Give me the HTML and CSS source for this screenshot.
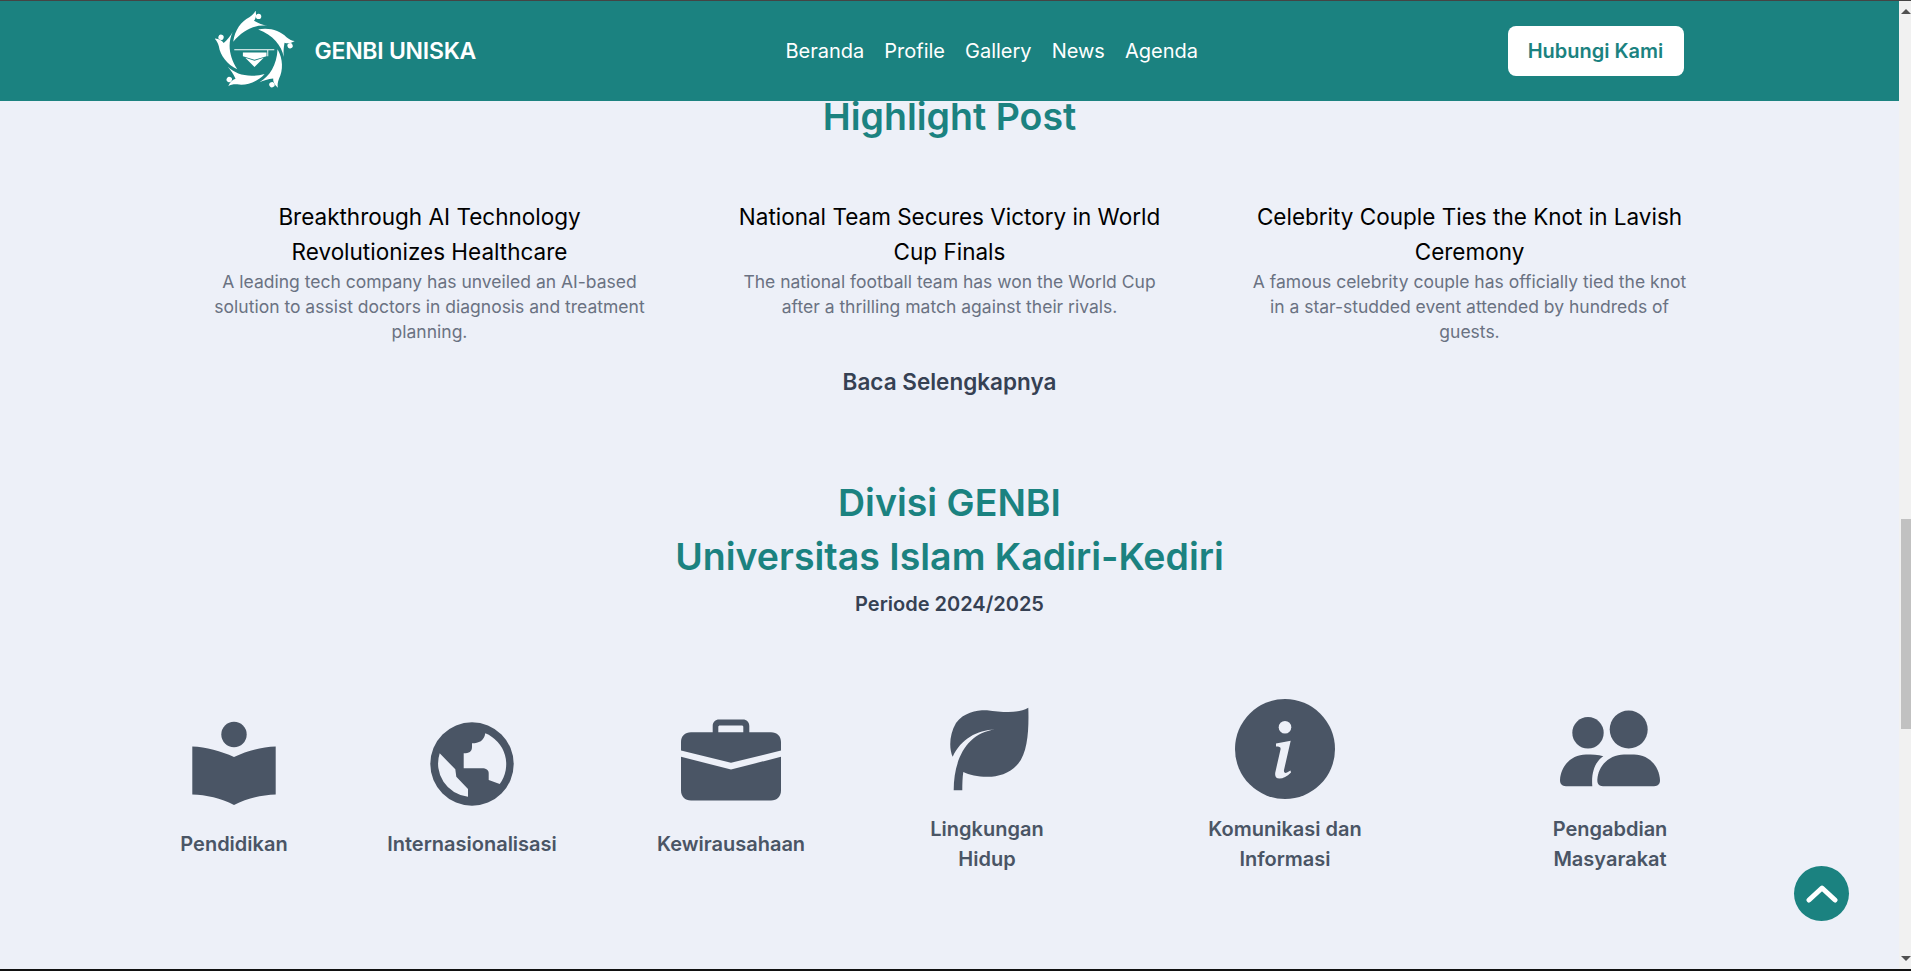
FILE: index.html
```html
<!DOCTYPE html>
<html lang="id">
<head>
<meta charset="utf-8">
<title>GENBI UNISKA</title>
<link rel="stylesheet" href="styles.css">
</head>
<body>
<div class="window">
  <div class="page">
    <header class="navbar">
      <div class="navbar-inner">
        <a class="brand" href="#">
          <svg class="brand-logo" viewBox="15.5 6 78 78" fill="#fff">
            <g id="arm">
              <circle cx="58" cy="11.3" r="2.6"/>
              <path d="M33.3 36C34.5 25 41 16 49 12C52 10 54 8 55 5.5C56 10 55.5 13 53.5 15.5C58 18 62 19.5 66.5 20.5C55 19 43 24 33.3 36Z"/>
            </g>
            <use href="#arm" transform="rotate(72 53.7 46.7)"/>
            <use href="#arm" transform="rotate(144 53.7 46.7)"/>
            <use href="#arm" transform="rotate(216 53.7 46.7)"/>
            <use href="#arm" transform="rotate(288 53.7 46.7)"/>
            <path d="M34.3 43.2H73.3V44.2H67.4V50H66.5V44.2H34.3Z"/>
            <path d="M42.7 46.5H65.7V50L54 53.5L42.7 50Z"/>
            <path d="M45 51.5L54 54.5L63 51.5L54 60.5Z"/>
          </svg>
          <span class="brand-name">GENBI UNISKA</span>
        </a>
        <nav class="nav-links">
          <a href="#">Beranda</a>
          <a href="#">Profile</a>
          <a href="#">Gallery</a>
          <a href="#">News</a>
          <a href="#">Agenda</a>
        </nav>
        <a class="contact-btn" href="#">Hubungi Kami</a>
      </div>
    </header>

    <section class="highlight">
      <h2 class="section-title">Highlight Post</h2>
      <div class="post-grid">
        <article class="post">
          <h3>Breakthrough AI Technology Revolutionizes Healthcare</h3>
          <p>A leading tech company has unveiled an AI-based solution to assist doctors in diagnosis and treatment planning.</p>
        </article>
        <article class="post">
          <h3>National Team Secures Victory in World Cup Finals</h3>
          <p>The national football team has won the World Cup after a thrilling match against their rivals.</p>
        </article>
        <article class="post">
          <h3>Celebrity Couple Ties the Knot in Lavish Ceremony</h3>
          <p>A famous celebrity couple has officially tied the knot in a star-studded event attended by hundreds of guests.</p>
        </article>
      </div>
      <a class="read-more" href="#">Baca Selengkapnya</a>
    </section>

    <section class="divisions">
      <h2 class="section-title">Divisi GENBI<br>Universitas Islam Kadiri-Kediri</h2>
      <p class="period">Periode 2024/2025</p>
      <div class="division-grid">
        <div class="division">
          <svg class="division-icon" viewBox="0 0 100 100" fill="#4a5565">
            <circle cx="50" cy="20.5" r="12.7"/>
            <path d="M8.3 32.5C22 33 37 37 50 43C63 37 78 33 91.7 32.5V80.5C78 81 63 84 50 91C37 84 22 81 8.3 80.5Z"/>
          </svg>
          <span>Pendidikan</span>
        </div>
        <div class="division">
          <svg class="division-icon" viewBox="0 0 100 100" fill="#4a5565">
            <path fill-rule="evenodd" d="M50 8.3A41.7 41.7 0 1 0 50 91.7A41.7 41.7 0 1 0 50 8.3ZM63.3 19.3A33.3 33.3 0 0 1 77.7 70L66.7 66V59.3C66.7 56 64 54.3 60 54.3H41.7V39.3C47 39.3 50 37.7 50 33V29.3C57 29.3 62 27 63.3 19.3ZM46 82.7A33.3 33.3 0 0 1 17.7 39.3L33.3 55.3L34.3 62.7L46 75Z"/>
          </svg>
          <span>Internasionalisasi</span>
        </div>
        <div class="division">
          <svg class="division-icon" viewBox="0 0 100 100" fill="#4a5565">
            <path fill-rule="evenodd" d="M31.7 18.2V12C31.7 8 34.5 5.5 38 5.5H62C65.5 5.5 68.3 8 68.3 12V18.2H90C96 18.2 100 22 100 28V36.5L50 48.8L0 36.5V28C0 22 4 18.2 10 18.2ZM37.3 18.2H62.3V13C62.3 12 61.7 11.5 60.7 11.5H39C38 11.5 37.3 12 37.3 13Z"/>
            <path d="M0 42.8L50 55.5L100 42.8V76.5C100 82.5 96 86.5 90 86.5H10C4 86.5 0 82.5 0 76.5Z"/>
          </svg>
          <span>Kewirausahaan</span>
        </div>
        <div class="division">
          <svg class="division-icon" viewBox="0 0 100 100" fill="#4a5565">
            <path d="M91.3 8.8C92 30 91 55 80 66C72 75 60 78 50 77.8C41 77.8 32 76 26.3 73C25.5 78 25.3 85 25.3 91.2H16.7C16.7 60 30 34 58 30.5C40 31 24 40 15.7 57.8C12 50 12 36 19 24C27 13 40 11 50 11.2C65 13 80 15 91.3 8.8Z"/>
          </svg>
          <span>Lingkungan<br>Hidup</span>
        </div>
        <div class="division">
          <svg class="division-icon" viewBox="0 0 100 100">
            <circle cx="50" cy="50" r="50" fill="#4a5565"/>
            <circle cx="50" cy="28.3" r="6.3" fill="#edf0f8"/>
            <path fill="#edf0f8" d="M41 44.5L55.7 41.7L49 71C48.6 73.5 50 74.5 52 73.5L55.5 71.5L56 73.5C52 77.5 48 79.5 44.5 79.5C40.5 79.5 39.5 76.5 40.5 72.5L45.5 50.5C46 48 44.5 47.5 41 47.5Z"/>
          </svg>
          <span>Komunikasi dan<br>Informasi</span>
        </div>
        <div class="division">
          <svg class="division-icon" viewBox="0 0 100 100" fill="#4a5565">
            <circle cx="28" cy="33.8" r="15.7"/>
            <circle cx="68.7" cy="30.5" r="19"/>
            <path d="M6 87.2C2 87.2 0 85 0 81C1 66 12 55.5 26 55.5C32 55.5 38 55.7 43.3 57.2C36 62 31 72 32.3 87.2Z"/>
            <path d="M43 87.2C39 87.2 37.3 85 37.3 81C38 66 50 55.5 64 55.5H74C88 55.5 99 66 100 81C100 85 98 87.2 94 87.2Z"/>
          </svg>
          <span>Pengabdian<br>Masyarakat</span>
        </div>
      </div>
    </section>

    <a class="to-top" href="#" aria-label="Kembali ke atas">
      <svg viewBox="0 0 32 32" fill="none" stroke="#fff" stroke-width="5" stroke-linecap="round" stroke-linejoin="round"><path d="M3 22L16 10L29 22"/></svg>
    </a>
  </div>
  <div class="scrollbar">
    <span class="arrow-up"></span>
    <div class="scroll-track"><div class="scroll-thumb"></div></div>
    <span class="arrow-down"></span>
  </div>
</div>
</body>
</html>
```
FILE: styles.css
```css
* { box-sizing: border-box; }
html, body { margin: 0; height: 100%; overflow: hidden; }
body { font-family: Inter, "Noto Sans", sans-serif; background: #edf0f8; color: #364153; }
a { text-decoration: none; color: inherit; }
.window {
  display: flex; height: 971px;
  border-top: 1px solid #444; border-bottom: 2px solid #111;
}
.page { flex: 1; position: relative; min-width: 0; overflow: hidden; background: #edf0f8; }
.navbar { height: 100px; background: #1b8280; display: flex; justify-content: center; }
.navbar-inner { width: 1470px; display: flex; align-items: center; }
.brand { display: flex; align-items: center; gap: 20px; width: 571px; color: #fff; }
.brand-logo { width: 80px; height: 80px; }
.brand-name { font-size: 23px; font-weight: 600; letter-spacing: -0.25px; }
.nav-links { display: flex; gap: 20px; color: #fff; font-size: 20px; }
.contact-btn {
  margin-left: auto; margin-right: 1px; width: 176px; height: 50px; border-radius: 8px; background: #fff;
  color: #1b8280; font-size: 20px; font-weight: 600; display: flex; align-items: center; justify-content: center;
}
.section-title { margin: 0; text-align: center; color: #1b8280; font-size: 37.5px; font-weight: 600; line-height: 54px; }
.highlight { display: flex; flex-direction: column; align-items: center; }
.highlight .section-title { line-height: 32px; }
.post-grid { width: 1476px; margin-top: 66px; display: grid; grid-template-columns: repeat(3, 1fr); gap: 84px; }
.post { text-align: center; }
.post h3 { margin: 0; color: #000; font-size: 22.5px; font-weight: 400; line-height: 35px; }
.post p { margin: 0; color: #6a7282; font-size: 17.5px; line-height: 25px; }
.read-more { margin-top: 20px; font-size: 22.5px; font-weight: 600; line-height: 36px; }
.divisions { margin-top: 76px; }
.period { margin: 4px 0 0; text-align: center; font-size: 20px; font-weight: 600; line-height: 32px; }
.division-grid {
  margin-top: 79px; margin-left: 131px; display: grid; align-items: center;
  grid-template-columns: 206px 270px 248px 264px 332px 318px;
}
.division { display: flex; flex-direction: column; align-items: center; text-align: center; gap: 15px; font-size: 20px; font-weight: 600; line-height: 30px; color: #4a5565; }
.division-icon { width: 100px; height: 100px; }
.to-top {
  position: absolute; left: 1794px; top: 865px; width: 55px; height: 55px; border-radius: 50%;
  background: #1b8280; display: flex; align-items: center; justify-content: center;
}
.to-top svg { width: 32px; height: 32px; }
.scrollbar { width: 12px; background: #f1f1f1; display: flex; flex-direction: column; align-items: flex-end; padding: 0; }
.scroll-track { flex: 1; width: 10px; padding-top: 497px; }
.scroll-thumb { height: 210px; background: #c1c1c1; }
.arrow-up, .arrow-down { width: 0; height: 0; border-left: 5px solid transparent; border-right: 5px solid transparent; margin: 8px 0; }
.arrow-up { border-bottom: 5px solid #505050; }
.arrow-down { border-top: 5px solid #505050; }
```
